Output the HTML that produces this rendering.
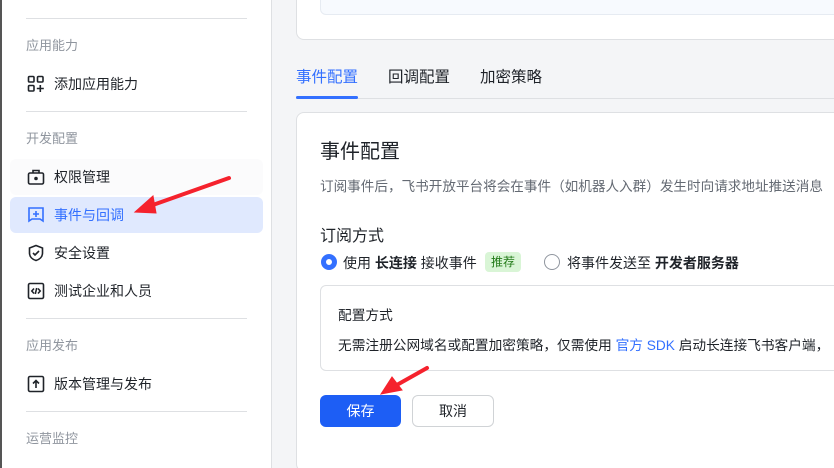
<!DOCTYPE html>
<html style="width:834px;height:468px;overflow:hidden"><head><meta charset="utf-8"><style>
*{margin:0;padding:0;box-sizing:border-box}
body{width:834px;height:468px;overflow:hidden;background:#f4f5f7;font-family:"Liberation Sans","Noto Sans CJK SC",sans-serif;position:relative;color:#1f2329}
.abs{position:absolute}
.side{left:0;top:0;width:272px;height:468px;background:#fff;border-right:1px solid #dee0e3;border-left:2px solid #555}
.div{position:absolute;left:24px;width:221px;height:1px;background:#dee0e3}
.sec{position:absolute;left:24px;font-size:13px;color:#8f959e;line-height:16px}
.item{position:absolute;left:52px;font-size:14px;line-height:18px;color:#1f2329}
.ic{position:absolute;left:25px}
</style></head><body>
<div class="abs side">
<div class="div" style="top:18px"></div>
<div class="sec" style="top:38px">应用能力</div>
<svg class="ic" style="top:75px" width="18" height="18" viewBox="0 0 18 18" fill="none" stroke="#1f2329" stroke-width="1.6"><rect x="1.5" y="1.5" width="5.5" height="5.5" rx="1"/><rect x="10.5" y="1.5" width="5.5" height="5.5" rx="1"/><rect x="1.5" y="10.5" width="5.5" height="5.5" rx="1"/><path d="M13.3 10v7M9.8 13.5h7"/></svg>
<div class="item" style="top:75px">添加应用能力</div>
<div class="div" style="top:111px"></div>
<div class="sec" style="top:131px">开发配置</div>
<div class="abs" style="left:8px;top:159px;width:253px;height:36px;background:#fbfbfc;border-radius:6px"></div>
<svg class="ic" style="top:168px" width="18" height="18" viewBox="0 0 18 18" fill="none" stroke="#1f2329" stroke-width="1.6"><rect x="1.5" y="5" width="15" height="11" rx="1.5"/><path d="M6 5V2.5h6V5"/><circle cx="9" cy="10.5" r="1" fill="#1f2329"/></svg>
<div class="item" style="top:168px">权限管理</div>
<div class="abs" style="left:8px;top:197px;width:253px;height:36px;background:#e0e9fe;border-radius:6px"></div>
<svg class="ic" style="top:206px" width="18" height="18" viewBox="0 0 18 18" fill="none" stroke="#3370ff" stroke-width="1.6"><path d="M2 2h14v13l-3-2H5l-3 2z"/><path d="M9 5v6M6 8h6"/></svg>
<div class="item" style="top:206px;color:#3370ff">事件与回调</div>
<svg class="ic" style="top:244px" width="18" height="18" viewBox="0 0 18 18" fill="none" stroke="#1f2329" stroke-width="1.6"><path d="M9 1.5l6.5 2.5v5c0 4-3 6.5-6.5 7.5C5.5 15.5 2.5 13 2.5 9V4z"/><path d="M6 9l2 2 4-4"/></svg>
<div class="item" style="top:244px">安全设置</div>
<svg class="ic" style="top:282px" width="18" height="18" viewBox="0 0 18 18" fill="none" stroke="#1f2329" stroke-width="1.6"><rect x="1.5" y="1.5" width="15" height="15" rx="1.5"/><path d="M7 6.5L4.8 9 7 11.5M11 6.5L13.2 9 11 11.5M9.7 6l-1.4 6"/></svg>
<div class="item" style="top:282px">测试企业和人员</div>
<div class="div" style="top:318px"></div>
<div class="sec" style="top:338px">应用发布</div>
<svg class="ic" style="top:375px" width="18" height="18" viewBox="0 0 18 18" fill="none" stroke="#1f2329" stroke-width="1.6"><rect x="1.5" y="1.5" width="15" height="15" rx="1.5"/><path d="M9 13V5.5M6 8.5l3-3 3 3"/></svg>
<div class="item" style="top:375px">版本管理与发布</div>
<div class="div" style="top:411px"></div>
<div class="sec" style="top:431px">运营监控</div>
</div>

<div class="abs" style="left:296px;top:-10px;width:560px;height:50px;background:#fff;border:1px solid #dee0e3;border-radius:8px"></div>
<div class="abs" style="left:320px;top:-10px;width:540px;height:25px;background:#f7fafe;border:1px solid #e6ebf2;border-radius:6px"></div>

<div class="abs" style="left:296px;top:98px;width:540px;height:1px;background:#dee0e3"></div>
<div class="abs" style="left:296px;top:65px;font-size:15.5px;color:#3370ff">事件配置</div>
<div class="abs" style="left:296px;top:96px;width:62px;height:3px;background:#3370ff;border-radius:2px"></div>
<div class="abs" style="left:388px;top:65px;font-size:15.5px">回调配置</div>
<div class="abs" style="left:480px;top:65px;font-size:15.5px">加密策略</div>

<div class="abs" style="left:296px;top:112px;width:560px;height:360px;background:#fff;border:1px solid #dee0e3;border-radius:8px"></div>
<div class="abs" style="left:320px;top:140px;font-size:20px;line-height:24px">事件配置</div>
<div class="abs" style="left:320px;top:175px;font-size:13.6px;color:#646a73;white-space:nowrap">订阅事件后，飞书开放平台将会在事件（如机器人入群）发生时向请求地址推送消息</div>
<div class="abs" style="left:320px;top:222px;font-size:16px">订阅方式</div>
<div class="abs" style="left:321px;top:254px;width:16px;height:16px;border-radius:50%;border:5px solid #3370ff;background:#fff"></div>
<div class="abs" style="left:343px;top:253px;font-size:14px;white-space:nowrap">使用 <b>长连接</b> 接收事件</div>
<div class="abs" style="left:485px;top:252px;width:36px;height:20px;background:#d9f5d6;border-radius:4px;font-size:12px;color:#237b19;text-align:center;line-height:20px">推荐</div>
<div class="abs" style="left:544px;top:254px;width:16px;height:16px;border-radius:50%;border:1px solid #8f959e"></div>
<div class="abs" style="left:567px;top:253px;font-size:14px;white-space:nowrap">将事件发送至 <b>开发者服务器</b></div>
<div class="abs" style="left:320px;top:285px;width:540px;height:86px;border:1px solid #dee0e3;border-radius:6px"></div>
<div class="abs" style="left:338px;top:304px;font-size:13.7px">配置方式</div>
<div class="abs" style="left:338px;top:334px;font-size:13.7px;white-space:nowrap">无需注册公网域名或配置加密策略，仅需使用 <span style="color:#3370ff">官方 SDK</span> 启动长连接飞书客户端，</div>
<div class="abs" style="left:320px;top:395px;width:81px;height:32px;background:#1d5ef5;border-radius:6px;color:#fff;font-size:14px;text-align:center;line-height:32px">保存</div>
<div class="abs" style="left:412px;top:395px;width:82px;height:32px;border:1px solid #d0d3d6;border-radius:6px;font-size:14px;text-align:center;line-height:30px;background:#fff">取消</div>

<svg class="abs" style="left:0;top:0" width="834" height="468">
<g stroke="#f5222d" stroke-width="4" stroke-linecap="round" fill="#f5222d">
<line x1="229" y1="178" x2="150" y2="206"/>
<path d="M135 212L153 196L156 213Z" stroke-width="1"/>
<line x1="427" y1="368" x2="395" y2="386"/>
<path d="M381 394L392 377L402 390Z" stroke-width="1"/>
</g></svg>
</body></html>
